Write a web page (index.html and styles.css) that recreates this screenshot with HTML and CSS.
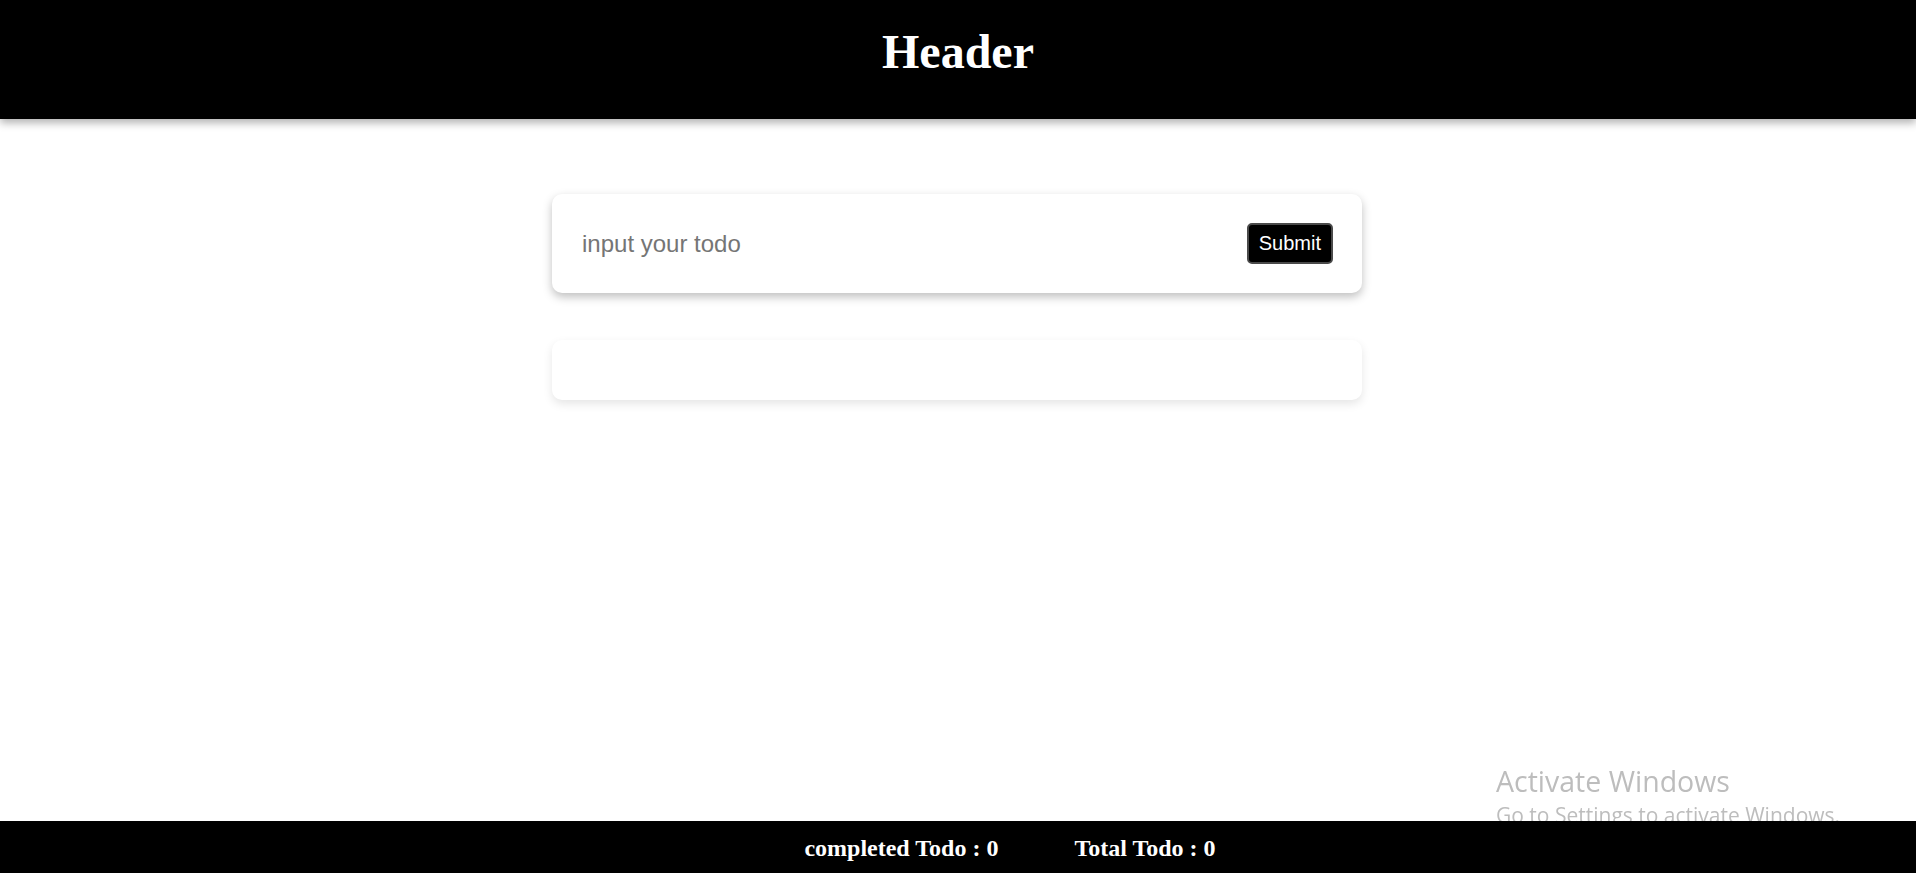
FILE: index.html
```html
<!DOCTYPE html>
<html lang="en">
<head>
<meta charset="utf-8">
<title>Todo</title>
<link rel="stylesheet" href="styles.css">
</head>
<body>
<header class="top-bar">
  <h1 class="top-title">Header</h1>
</header>
<main class="content">
  <form class="card card-input">
    <input class="todo-input" type="text" placeholder="input your todo">
    <button class="submit-btn" type="button">Submit</button>
  </form>
  <section class="card card-list"></section>
</main>
<footer class="bottom-bar">
  <span class="stat">completed Todo : 0</span>
  <span class="stat">Total Todo : 0</span>
</footer>
<div class="watermark">
  <div class="wm-title">Activate Windows</div>
  <div class="wm-sub">Go to Settings to activate Windows.</div>
</div>
</body>
</html>
```

FILE: styles.css
```css
html, body {
  margin: 0;
  padding: 0;
  height: 100%;
}
body {
  font-family: "Liberation Sans", Arial, sans-serif;
  background: #ffffff;
  overflow: hidden;
}
.top-bar {
  background: #000000;
  height: 119px;
  box-sizing: border-box;
  padding-top: 24px;
  box-shadow: 0 4px 8px rgba(0, 0, 0, 0.3);
  position: relative;
  z-index: 2;
}
.top-title {
  margin: 0;
  font-family: "Liberation Serif", "Times New Roman", serif;
  font-size: 48px;
  font-weight: bold;
  color: #ffffff;
  text-align: center;
  line-height: normal;
}
.content {
  display: flex;
  flex-direction: column;
  align-items: center;
  padding-top: 75px;
  padding-right: 2px;
}
.card {
  width: 810px;
  box-sizing: border-box;
  background: #ffffff;
  border-radius: 10px;
}
.card-input {
  display: flex;
  align-items: center;
  padding: 29px 29px 29px 30px;
  margin: 0;
  box-shadow: 0 4px 10px rgba(0, 0, 0, 0.25);
}
.todo-input {
  flex: 1;
  border: none;
  outline: none;
  padding: 0;
  height: 41px;
  font-family: "Liberation Sans", Arial, sans-serif;
  font-size: 24px;
  color: #333;
  background: transparent;
}
.todo-input::placeholder {
  color: #757575;
}
.submit-btn {
  height: 41px;
  box-sizing: border-box;
  padding: 0 10px;
  background: #000000;
  color: #ffffff;
  border: 2px solid #4a4a4a;
  border-radius: 5px;
  font-family: "Liberation Sans", Arial, sans-serif;
  font-size: 20px;
}
.card-list {
  margin-top: 47px;
  height: 60px;
  box-shadow: 0 4px 10px rgba(0, 0, 0, 0.1);
}
.bottom-bar {
  position: fixed;
  left: 0;
  right: 0;
  bottom: 0;
  height: 52px;
  background: #000000;
  display: flex;
  justify-content: center;
  align-items: center;
  gap: 76px;
  padding-left: 104px;
  padding-top: 3px;
  box-sizing: border-box;
  z-index: 3;
}
.stat {
  font-family: "Liberation Serif", "Times New Roman", serif;
  font-size: 24px;
  font-weight: bold;
  color: #ffffff;
}
.watermark {
  position: fixed;
  left: 1496px;
  top: 764px;
  z-index: 2;
  font-family: "Open Sans", "Noto Sans", sans-serif;
  color: #bdbdbd;
  pointer-events: none;
}
.wm-title {
  font-size: 28.5px;
  line-height: 34px;
}
.wm-sub {
  font-size: 21px;
  line-height: 34px;
}
```
